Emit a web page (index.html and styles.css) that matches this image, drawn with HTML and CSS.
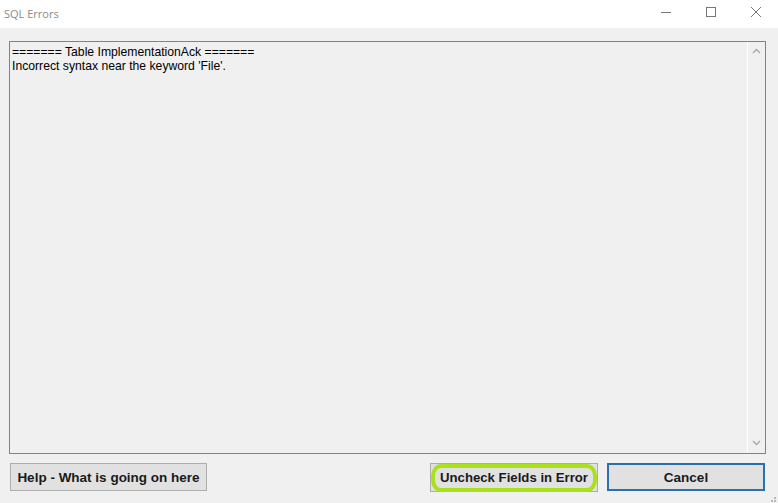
FILE: index.html
```html
<!DOCTYPE html>
<html>
<head>
<meta charset="utf-8">
<link rel="stylesheet" href="styles.css">
</head>
<body>
<div class="window">
  <div class="titlebar">
    <span class="title">SQL Errors</span>
    <div class="controls">
      <span class="ctl"><svg width="12" height="12" viewBox="0 0 12 12"><path d="M1 6.5H11" stroke="#777" stroke-width="1"/></svg></span>
      <span class="ctl"><svg width="12" height="12" viewBox="0 0 12 12"><rect x="1.5" y="1.5" width="9" height="9" fill="none" stroke="#777" stroke-width="1"/></svg></span>
      <span class="ctl"><svg width="12" height="12" viewBox="0 0 12 12"><path d="M1 1L11 11M11 1L1 11" stroke="#777" stroke-width="1"/></svg></span>
    </div>
  </div>
  <div class="content">
    <div class="textbox">
      <div class="text">
        <div>======= Table ImplementationAck =======</div>
        <div>Incorrect syntax near the keyword 'File'.</div>
      </div>
      <div class="scrollbar">
        <svg class="arrow" width="9" height="6" viewBox="0 0 9 6"><path d="M1 5L4.5 1.5L8 5" fill="none" stroke="#a6a6a6" stroke-width="1.3"/></svg>
        <svg class="arrow" width="9" height="6" viewBox="0 0 9 6"><path d="M1 1L4.5 4.5L8 1" fill="none" stroke="#a6a6a6" stroke-width="1.3"/></svg>
      </div>
    </div>
    <div class="buttons">
      <button class="btn help">Help - What is going on here</button>
      <div class="spacer"></div>
      <div class="hl-wrap">
        <button class="btn uncheck">Uncheck Fields in Error</button>
        <span class="highlight"></span>
      </div>
      <button class="btn cancel">Cancel</button>
    </div>
  </div>
  <div class="grip">
    <svg width="10" height="10" viewBox="0 0 10 10">
      <rect x="7" y="1" width="2" height="2" fill="#b8b8b8"/>
      <rect x="4" y="4" width="2" height="2" fill="#b8b8b8"/>
      <rect x="7" y="4" width="2" height="2" fill="#b8b8b8"/>
      <rect x="1" y="7" width="2" height="2" fill="#b8b8b8"/>
      <rect x="4" y="7" width="2" height="2" fill="#b8b8b8"/>
      <rect x="7" y="7" width="2" height="2" fill="#b8b8b8"/>
    </svg>
  </div>
</div>
</body>
</html>
```

FILE: styles.css
```css
html, body {
  margin: 0;
  padding: 0;
  background: #f0f0f0;
}
.window {
  position: relative;
  width: 778px;
  height: 503px;
  background: #f0f0f0;
  font-family: "Liberation Sans", Arial, sans-serif;
}
.titlebar {
  height: 28px;
  background: #ffffff;
  display: flex;
  align-items: center;
  justify-content: space-between;
}
.title {
  font-family: "Open Sans", "Noto Sans", sans-serif;
  font-size: 11px;
  color: #8a8a8a;
  padding-left: 4px;
  margin-top: -2px;
}
.controls {
  display: flex;
  height: 28px;
}
.ctl {
  width: 45px;
  display: flex;
  align-items: center;
  justify-content: center;
  margin-top: -4px;
}
.content {
  padding: 13px 12px 0 9px;
}
.textbox {
  height: 411px;
  border: 1px solid #828282;
  display: flex;
  background: #f0f0f0;
}
.text {
  flex: 1;
  padding: 3px 0 0 2px;
  font-size: 12.2px;
  line-height: 14px;
  color: #000;
}
.scrollbar {
  width: 17px;
  border-left: 1px solid #ffffff;
  display: flex;
  flex-direction: column;
  justify-content: space-between;
  align-items: center;
  padding: 6px 0 7px;
}
.buttons {
  display: flex;
  margin-top: 9px;
  align-items: flex-start;
}
.btn {
  font-family: "Liberation Sans", Arial, sans-serif;
  font-weight: bold;
  font-size: 13.5px;
  color: #1a1a1a;
  background: #e1e1e1;
  border: 1px solid #adadad;
  height: 28px;
  padding: 0;
  margin: 0;
}
.help {
  width: 197px;
  margin-left: 1px;
}
.spacer {
  flex: 1;
}
.hl-wrap {
  position: relative;
  width: 168px;
  height: 29px;
  margin-right: 9px;
}
.uncheck {
  width: 168px;
  height: 29px;
  font-size: 13.2px;
}
.highlight {
  position: absolute;
  left: 1px;
  top: 1px;
  right: 1px;
  bottom: 0px;
  border: 4px solid #a9e11a;
  border-radius: 10px / 12px;
  pointer-events: none;
}
.cancel {
  width: 158px;
  border: 2px solid #2a70ad;
  margin-right: 1px;
}
.grip {
  position: absolute;
  right: 1px;
  bottom: 1px;
  width: 10px;
  height: 10px;
}
```
